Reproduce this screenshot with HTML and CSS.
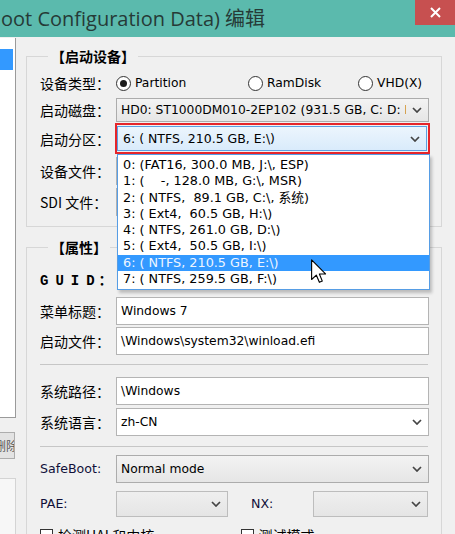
FILE: index.html
```html
<!DOCTYPE html>
<html lang="zh-CN">
<head>
  <meta charset="UTF-8" />
  <title>BCD 编辑</title>
  <link rel="stylesheet" href="styles.css">
</head>
<body>
  <header class="titlebar">
    <span class="title">oot Configuration Data) 编辑</span>
    <div class="close">
      <svg width="11" height="11" viewBox="0 0 11 11"><path d="M1 1 L10 10 M10 1 L1 10" stroke="#fff" stroke-width="2"/></svg>
    </div>
  </header>

  <div class="content">
    <aside class="side">
      <div class="tree"><div class="tree-sel"></div></div>
      <div class="side-btn"><span>删除</span></div>
      <div class="side-box"></div>
    </aside>

    <main class="main">
      <fieldset class="group group-device">
        <legend>【启动设备】</legend>

        <div class="row row-radio">
          <span class="lbl">设备类型：</span>
          <label class="radio r-part"><span class="dot checked"></span>Partition</label>
          <label class="radio r-ram"><span class="dot"></span>RamDisk</label>
          <label class="radio"><span class="dot"></span>VHD(X)</label>
        </div>

        <div class="row row-disk">
          <span class="lbl">启动磁盘：</span>
          <div class="combo">
            <span class="val">HD0: ST1000DM010-2EP102 (931.5 GB, C: D: E: F:)</span>
            <span class="chev"><svg width="10" height="6" viewBox="0 0 10 6"><path d="M1 1 L5 5 L9 1" fill="none" stroke="#444" stroke-width="1.7"/></svg></span>
          </div>
        </div>

        <div class="row row-part">
          <span class="lbl">启动分区：</span>
          <div class="pick">
            <div class="combo focus">
              <span class="val">6: ( NTFS, 210.5 GB, E:\)</span>
              <span class="chev"><svg width="10" height="6" viewBox="0 0 10 6"><path d="M1 1 L5 5 L9 1" fill="none" stroke="#444" stroke-width="1.7"/></svg></span>
            </div>
            <ul class="droplist">
              <li>0: (FAT16, 300.0 MB, J:\, ESP)</li>
              <li>1: (    -, 128.0 MB, G:\, MSR)</li>
              <li>2: ( NTFS,  89.1 GB, C:\, 系统)</li>
              <li>3: ( Ext4,  60.5 GB, H:\)</li>
              <li>4: ( NTFS, 261.0 GB, D:\)</li>
              <li>5: ( Ext4,  50.5 GB, I:\)</li>
              <li class="hot">6: ( NTFS, 210.5 GB, E:\)</li>
              <li>7: ( NTFS, 259.5 GB, F:\)</li>
            </ul>
            <svg class="cursor" width="16" height="25" viewBox="0 0 13 20">
              <path d="M0.5 0.5 L0.5 16.5 L4.3 12.9 L6.8 18.8 L9.2 17.8 L6.8 12 L11.8 12 Z" fill="#fff" stroke="#000" stroke-width="0.9" stroke-linejoin="round"/>
            </svg>
          </div>
        </div>

        <div class="row row-file">
          <span class="lbl">设备文件：</span>
          <div class="field"></div>
        </div>

        <div class="row row-sdi">
          <span class="lbl">SDI 文件：</span>
          <div class="field"></div>
        </div>
      </fieldset>

      <fieldset class="group group-props">
        <legend>【属性】</legend>

        <div class="row row-guid">
          <span class="lbl guid">GUID<span class="colon">：</span></span>
        </div>

        <div class="row">
          <span class="lbl">菜单标题：</span>
          <div class="field">Windows 7</div>
        </div>

        <div class="row">
          <span class="lbl">启动文件：</span>
          <div class="field">\Windows\system32\winload.efi</div>
        </div>

        <div class="sep"></div>

        <div class="row">
          <span class="lbl">系统路径：</span>
          <div class="field">\Windows</div>
        </div>

        <div class="row row-lang">
          <span class="lbl">系统语言：</span>
          <div class="combo edit">
            <span class="val">zh-CN</span>
            <span class="chev"><svg width="10" height="6" viewBox="0 0 10 6"><path d="M1 1 L5 5 L9 1" fill="none" stroke="#444" stroke-width="1.7"/></svg></span>
          </div>
        </div>

        <div class="sep sep-b"></div>

        <div class="row row-safe">
          <span class="lbl latin">SafeBoot:</span>
          <div class="combo">
            <span class="val">Normal mode</span>
            <span class="chev"><svg width="10" height="6" viewBox="0 0 10 6"><path d="M1 1 L5 5 L9 1" fill="none" stroke="#444" stroke-width="1.7"/></svg></span>
          </div>
        </div>

        <div class="row row-pae">
          <span class="lbl latin">PAE:</span>
          <div class="combo small">
            <span class="val"></span>
            <span class="chev"><svg width="10" height="6" viewBox="0 0 10 6"><path d="M1 1 L5 5 L9 1" fill="none" stroke="#444" stroke-width="1.7"/></svg></span>
          </div>
          <span class="lbl latin nx">NX:</span>
          <div class="combo small nx-box">
            <span class="val"></span>
            <span class="chev"><svg width="10" height="6" viewBox="0 0 10 6"><path d="M1 1 L5 5 L9 1" fill="none" stroke="#444" stroke-width="1.7"/></svg></span>
          </div>
        </div>

        <div class="row row-check">
          <label class="check"><span class="box"></span>检测HAL和内核</label>
          <label class="check check-r"><span class="box"></span>测试模式</label>
        </div>
      </fieldset>
    </main>
  </div>
</body>
</html>
```

FILE: styles.css
```css
* {
  box-sizing: border-box;
}
body {
  margin: 0;
  width: 455px;
  height: 534px;
  overflow: hidden;
  background: #f0f0f0;
  font: 12.3px/16px "DejaVu Sans", "Noto Sans CJK SC", sans-serif;
  color: #000;
}

/* title bar */
.titlebar {
  height: 37px;
  background: #5bbaad;
  display: flex;
  align-items: flex-start;
}
.title {
  font: 20px/37px "Open Sans", "Noto Sans CJK SC", sans-serif;
  color: #263a37;
  padding-left: 1px;
  white-space: nowrap;
}
.close {
  margin-left: auto;
  width: 40px;
  height: 25px;
  background: #c75050;
  display: flex;
  align-items: center;
  justify-content: center;
}

.content {
  display: flex;
  height: 497px;
}

/* left strip (tree + buttons) */
.side {
  width: 16px;
  display: flex;
  flex-direction: column;
}
.tree {
  height: 380px;
  margin-top: 1px;
  padding-top: 11px;
  background: #fff;
  border-right: 1px solid #9a9a9a;
  border-bottom: 1px solid #9a9a9a;
}
.tree-sel {
  width: 13px;
  height: 21px;
  background: #3399ff;
}
.side-btn {
  margin-top: 14px;
  width: 15px;
  height: 27px;
  background: #e3e3e3;
  border: 1px solid #adadad;
  border-left: none;
  display: flex;
  align-items: center;
  justify-content: flex-end;
  overflow: hidden;
  font: 12px/14px "Noto Sans CJK SC", sans-serif;
  color: #555;
}
.side-btn span {
  white-space: nowrap;
  margin-right: -4px;
}
.side-box {
  margin-top: 19px;
  flex: 1;
  width: 16px;
  background: #f7f7f7;
  border-top: 1px solid #d4d4d4;
  border-right: 1px solid #d4d4d4;
}

.main {
  margin-left: 10px;
  width: 416px;
}

/* group boxes */
.group {
  margin: 0;
  min-width: 0;
  border: 1px solid #d7d7d7;
  padding: 0 0 0 13px;
}
.group legend {
  margin-left: 8px;
  padding: 0 3px;
  font: bold 14px/18px "Noto Sans CJK SC", sans-serif;
}
.group-device {
  margin-top: 10px;
  height: 180px;
}
.group-props {
  margin-top: 11px;
  height: 320px;
}

.row {
  display: flex;
  align-items: center;
  height: 28px;
  margin-top: 2px;
}
.lbl {
  width: 76px;
  flex: none;
  font: 14px/18px "Noto Sans CJK SC", sans-serif;
  white-space: nowrap;
}
.lbl.latin {
  font: 12.6px/16px "DejaVu Sans", sans-serif;
  color: #10103a;
}
.guid {
  font: bold 14px/18px "Liberation Mono", monospace;
  letter-spacing: 7px;
}
.guid .colon {
  font-family: "Noto Sans CJK SC", sans-serif;
  letter-spacing: 0;
  margin-left: -3px;
}

/* radios */
.row-radio {
  margin-top: 7px;
  height: 22px;
}
.radio {
  display: flex;
  align-items: center;
  gap: 4px;
  white-space: nowrap;
}
.r-part {
  width: 132px;
}
.r-ram {
  width: 110px;
}
.dot {
  width: 15px;
  height: 15px;
  border: 1px solid #333;
  border-radius: 50%;
  background: #fff;
  display: flex;
  align-items: center;
  justify-content: center;
}
.dot.checked::after {
  content: '';
  width: 7px;
  height: 7px;
  border-radius: 50%;
  background: #1b1b1b;
}

/* combo boxes and text fields */
.combo,
.field {
  width: 313px;
  height: 28px;
  border: 1px solid #b4b4b4;
  display: flex;
  align-items: center;
  padding-left: 4px;
  white-space: nowrap;
}
.field {
  background: #fff;
}
.combo {
  background: linear-gradient(#f3f3f3, #e6e6e6);
  border-color: #acacac;
}
.combo.edit {
  background: #fff;
  border-color: #b4b4b4;
}
.combo .val {
  flex: 1;
  overflow: hidden;
}
.chev {
  width: 22px;
  flex: none;
  display: flex;
  justify-content: center;
}
.row-disk {
  margin-top: 4px;
  height: 24px;
}
.row-disk .combo {
  height: 24px;
}
.row-disk .val {
  max-width: 288px;
}

.row-part {
  margin-top: 1px;
  height: 31px;
}
.pick {
  position: relative;
  margin-left: -1px;
  width: 315px;
  height: 31px;
  border: 2px solid #e5252a;
  padding: 1px 1px 1px 0;
}
.combo.focus {
  width: 100%;
  height: 100%;
  border: 1px solid #5b9fe2;
  background: linear-gradient(#ecf5fd, #d9ebfb);
  padding-left: 5px;
  font-size: 12.5px;
}

/* open drop-down list */
.droplist {
  position: absolute;
  top: 29px;
  left: 0;
  width: 313px;
  height: 136px;
  margin: 0;
  padding: 2px 0 0;
  list-style: none;
  background: #fff;
  border: 1px solid #569de5;
  box-shadow: 2px 3px 3px rgba(0, 0, 0, 0.22);
  z-index: 2;
}
.droplist li {
  height: 16.3px;
  line-height: 16px;
  padding-left: 5px;
  font-size: 12.8px;
  white-space: pre;
}
.droplist li.hot {
  background: #3399ff;
  color: #eef5ff;
}
.cursor {
  position: absolute;
  left: 194px;
  top: 134px;
  z-index: 3;
}

.row-file {
  margin-top: 3px;
}
.row-sdi {
  margin-top: 3px;
}

/* properties; the separators' margins collapse with the rows' 2px */
.row-guid {
  margin-top: 10px;
}
.row-guid + .row {
  margin-top: 3px;
}
.sep {
  width: 388px;
  height: 1px;
  background: #c6c6c6;
  margin: 9px 0 12px;
}
.row-lang {
  margin-top: 3px;
}
.sep-b {
  margin: 10px 0 8px;
}
.row-safe {
  height: 27px;
}
.row-pae {
  margin-top: 9px;
  height: 26px;
}
.combo.small {
  width: 112px;
  height: 26px;
  background: linear-gradient(#efefef, #e5e5e5);
  border-color: #bdbdbd;
}
.lbl.nx {
  width: 62px;
  margin-left: 23px;
}
.combo.small.nx-box {
  width: 115px;
}
.row-check {
  margin-top: 9px;
  align-items: flex-start;
}
.check {
  display: flex;
  align-items: center;
  gap: 5px;
  font: 14px/18px "Noto Sans CJK SC", sans-serif;
  width: 218px;
}
.box {
  width: 13px;
  height: 13px;
  border: 1px solid #333;
  background: #fff;
}
```
